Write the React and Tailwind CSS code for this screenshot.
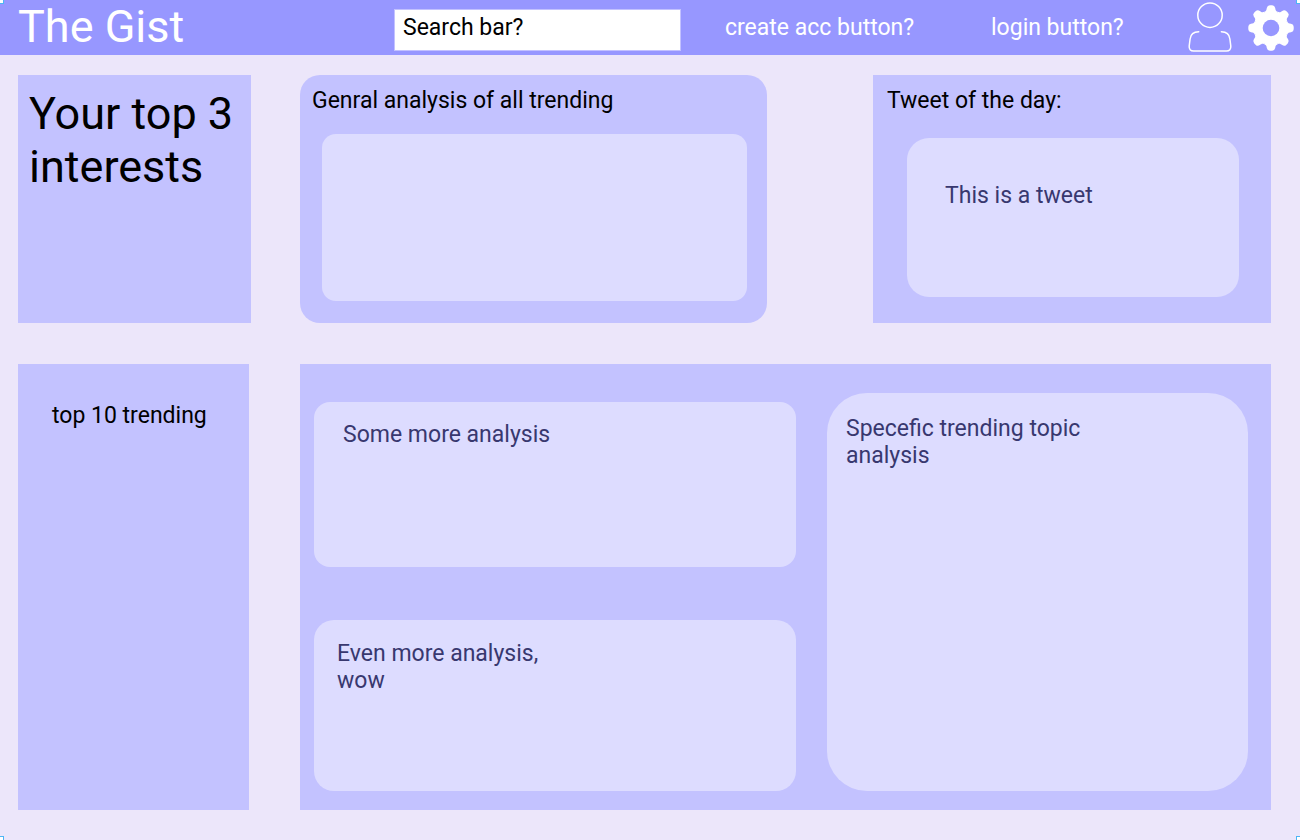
import React from 'react';

const TOOTH =
  'M-6.7 -16.2 C-4.6 -17 -4.5 -18 -4.2 -20 Q-3.6 -22.7 -1.2 -22.7 H1.2 Q3.6 -22.7 4.2 -20 C4.5 -18 4.6 -17 6.7 -16.2 L0 0 Z';

function UserIcon() {
  return (
    <svg viewBox="0 0 44 53" className="h-[53px] w-11" fill="none" stroke="white" strokeWidth="1.5" strokeLinecap="round" aria-hidden="true">
      <circle cx="22" cy="14.2" r="12.2" />
      <path d="M10.7 30.8 C5 30.8 2.6 33.5 2.1 38 L1.2 45 C0.9 48.3 2.6 50.1 5.6 50.1 H38.4 C41.4 50.1 43.1 48.3 42.8 45 L41.9 38 C41.4 33.5 39 30.8 33.4 30.8" />
    </svg>
  );
}

function GearIcon() {
  return (
    <svg viewBox="-23 -23 46 46" className="size-[46px]" aria-hidden="true">
      <g fill="white">
        <circle r="16.8" />
        {[0, 45, 90, 135, 180, 225, 270, 315].map((angle) => (
          <path key={angle} d={TOOTH} transform={`rotate(${angle})`} />
        ))}
      </g>
      <circle r="8.3" fill="#9797ff" />
    </svg>
  );
}

function Handle({ className }) {
  return <span aria-hidden="true" className={`absolute size-1 border-[#4db5f5] bg-white ${className}`} />;
}

export default function App() {
  return (
    <div className="relative min-h-screen bg-[#ece6fa] font-[Roboto,sans-serif] text-[23px] leading-[27px] text-black">
      <header className="flex h-[55px] items-center bg-[#9797ff] pr-[6px] pl-[18px] text-white">
        <h1 className="w-[376px] pb-[2px] text-[45px] leading-[50px]">The Gist</h1>
        <input
          type="text"
          aria-label="Search"
          defaultValue="Search bar?"
          className="mt-1 h-[42px] min-w-0 flex-1 border border-[#c3c2ff] bg-white px-2 pb-1 text-black outline-none"
        />
        <nav className="flex items-center">
          <button type="button" className="ml-11 w-[190px] text-left whitespace-nowrap">create acc button?</button>
          <button type="button" className="ml-[76px] w-[134px] text-left whitespace-nowrap">login button?</button>
          <button type="button" aria-label="Account" className="ml-[63px]"><UserIcon /></button>
          <button type="button" aria-label="Settings" className="ml-4"><GearIcon /></button>
        </nav>
      </header>

      <main className="pt-5 pr-[29px] pb-[29px] pl-[18px]">
        <div className="flex">
          <section className="h-[248px] w-[233px] bg-[#c3c2ff] px-[11px] pt-3">
            <h2 className="text-[45px] leading-[53px]">Your top 3 interests</h2>
          </section>
          <div className="ml-[49px] grid flex-1 grid-cols-[minmax(0,467fr)_minmax(0,398fr)] gap-x-[106px]">
            <section className="flex h-[248px] flex-col rounded-[20px] bg-[#c3c2ff] pt-3 pr-5 pb-[22px] pl-[22px]">
              <h2 className="-ml-[10px]">Genral analysis of all trending</h2>
              <div className="mt-5 flex-1 rounded-[14px] bg-[#dddcff]" />
            </section>
            <section className="flex h-[248px] flex-col bg-[#c3c2ff] pt-3 pr-8 pb-[26px] pl-[34px]">
              <h2 className="-ml-5">Tweet of the day:</h2>
              <div className="mt-6 flex-1 rounded-[22px] bg-[#dddcff] px-[38px] pt-11 text-[#38386f]">
                <p>This is a tweet</p>
              </div>
            </section>
          </div>
        </div>

        <div className="mt-[41px] flex">
          <section className="h-[446px] w-[231px] bg-[#c3c2ff] px-[34px] pt-[38px]">
            <h2 className="whitespace-nowrap">top 10 trending</h2>
          </section>
          <section className="ml-[51px] grid h-[446px] flex-1 grid-cols-[minmax(0,482fr)_minmax(0,421fr)] gap-x-[31px] bg-[#c3c2ff] pr-[23px] pb-[19px] pl-[14px]">
            <div className="flex flex-col pt-[38px]">
              <article className="h-[165px] rounded-2xl bg-[#dddcff] px-[29px] pt-[19px] text-[#38386f]">
                <p>Some more analysis</p>
              </article>
              <article className="mt-[53px] flex-1 rounded-[20px] bg-[#dddcff] px-[23px] pt-5 text-[#38386f]">
                <p className="max-w-[220px]">Even more analysis, wow</p>
              </article>
            </div>
            <article className="mt-[29px] rounded-[40px] bg-[#dddcff] px-[19px] pt-[22px] text-[#38386f]">
              <p className="max-w-[260px]">Specefic trending topic analysis</p>
            </article>
          </section>
        </div>
      </main>

      <Handle className="top-0 left-0 border-r border-b" />
      <Handle className="top-0 right-0 border-b border-l" />
      <Handle className="bottom-0 left-0 border-t border-r" />
      <Handle className="right-0 bottom-0 border-t border-l" />
    </div>
  );
}
